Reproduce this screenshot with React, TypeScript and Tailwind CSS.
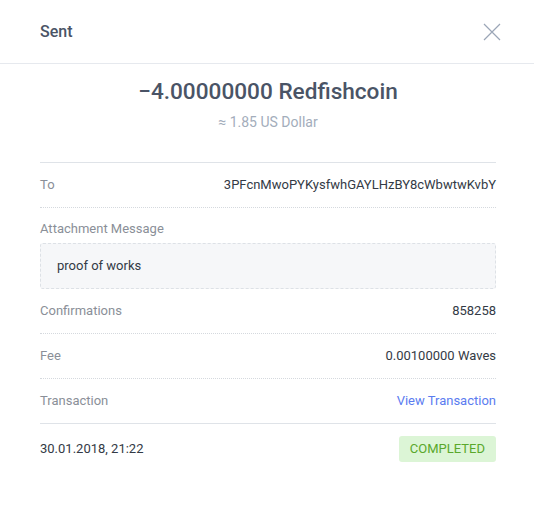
export default function App() {
    const rows = [
        { label: "Confirmations", value: "858258" },
        { label: "Fee", value: "0.00100000 Waves" },
    ];

    return (
        <div className="w-[534px] h-[513px] bg-white font-['Roboto',sans-serif] text-[13px]">
            {/* Header */}
            <div className="h-[64px] flex items-center justify-between pl-10 pr-8 border-b border-[#e6e9ee]">
                <h1 className="text-[16px] text-[#4a5466] font-medium pt-px">Sent</h1>
                <button className="w-[20px] h-[20px] flex items-center justify-center">
                    <svg width="18" height="18" viewBox="0 0 18 18" fill="none" stroke="#9ba6b7" strokeWidth="1.2">
                        <path d="M1 1 L17 17 M17 1 L1 17" />
                    </svg>
                </button>
            </div>

            <div className="pl-10 pr-[38px]">
                {/* Amount */}
                <div className="flex flex-col items-center pt-[15px] pb-[30px] border-b border-[#dfe3e8]">
                    <div className="text-[22.6px] leading-[26px] font-medium text-[#4a5466]">−4.00000000 Redfishcoin</div>
                    <div className="mt-[7px] text-[14px] leading-[20px] text-[#a3adbb]">≈ 1.85 US Dollar</div>
                </div>

                {/* To */}
                <div className="h-[45px] flex items-center justify-between border-b border-dotted border-[#d5d9de]">
                    <span className="text-[#8a8f98]">To</span>
                    <span className="text-[#333a45]">3PFcnMwoPYKysfwhGAYLHzBY8cWbwtwKvbY</span>
                </div>

                {/* Attachment */}
                <div className="pt-[13px]">
                    <div className="leading-4 text-[#8a8f98]">Attachment Message</div>
                    <div className="mt-[6px] h-[46px] flex items-center px-4 bg-[#f6f7f9] border border-dashed border-[#dde1e6] rounded-[3px] text-[#333a45]">
                        proof of works
                    </div>
                </div>

                {rows.map((r) => (
                    <div key={r.label} className="h-[45px] flex items-center justify-between border-b border-dotted border-[#d5d9de]">
                        <span className="text-[#8a8f98]">{r.label}</span>
                        <span className="text-[#333a45]">{r.value}</span>
                    </div>
                ))}

                <div className="h-[45px] flex items-center justify-between border-b border-[#dfe3e8]">
                    <span className="text-[#8a8f98]">Transaction</span>
                    <a className="text-[#5b7cf0]">View Transaction</a>
                </div>

                {/* Footer */}
                <div className="h-[50px] flex items-center justify-between">
                    <span className="text-[#333a45]">30.01.2018, 21:22</span>
                    <span className="h-[26px] px-[11px] flex items-center rounded-[3px] bg-[#dcf5d6] text-[#5aa82c]">COMPLETED</span>
                </div>
            </div>
        </div>
    );
}
